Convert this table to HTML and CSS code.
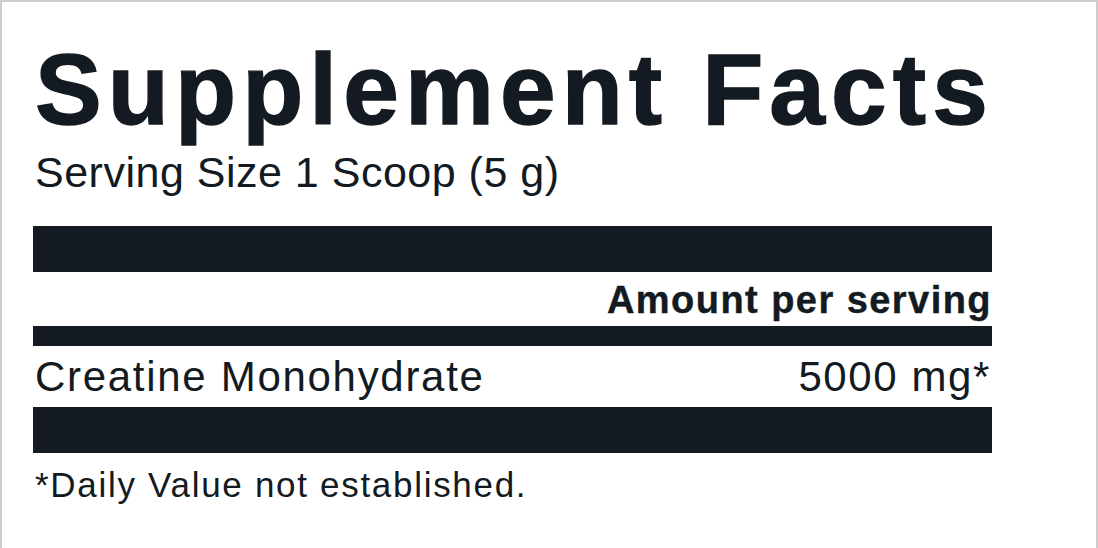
FILE: index.html
```html
<!DOCTYPE html>
<html lang="en">
<head>
<meta charset="utf-8">
<title>Supplement Facts</title>
<link rel="stylesheet" href="styles.css">
</head>
<body>
<div class="label">
  <h1 class="title">Supplement Facts</h1>
  <p class="serving">Serving Size 1 Scoop (5 g)</p>
  <div class="bar bar-thick"></div>
  <p class="amount">Amount per serving</p>
  <div class="bar bar-medium"></div>
  <div class="row">
    <span class="name">Creatine Monohydrate</span>
    <span class="qty">5000 mg*</span>
  </div>
  <div class="bar bar-thick bar-last"></div>
  <p class="note">*Daily Value not established.</p>
</div>
</body>
</html>
```
FILE: styles.css
```css
html, body {
  margin: 0;
  padding: 0;
  background: #ffffff;
}

body {
  font-family: "Liberation Sans", Arial, Helvetica, sans-serif;
  color: #131a21;
  overflow: hidden;
}

.label {
  box-sizing: border-box;
  width: 1098px;
  min-height: 100vh;
  border: 2px solid #cdcdcd;
  border-bottom: none;
  padding: 0 104px 0 31px;
}

.title {
  margin: 37px 0 0 2px;
  font-size: 100px;
  line-height: 100px;
  font-weight: 700;
  letter-spacing: 6.1px;
  -webkit-text-stroke: 1.4px #131a21;
  white-space: nowrap;
}

.serving {
  margin: 8px 0 0 2px;
  font-size: 43px;
  line-height: 50px;
  letter-spacing: 0.5px;
  white-space: nowrap;
}

.bar {
  background: #131a21;
}

.bar-thick {
  height: 46px;
  margin-top: 29px;
}

.amount {
  margin: 8px 0 0 0;
  font-size: 38px;
  line-height: 40px;
  font-weight: 700;
  letter-spacing: 1.45px;
  -webkit-text-stroke: 0.4px #131a21;
  text-align: right;
  white-space: nowrap;
}

.bar-medium {
  height: 20px;
  margin-top: 6px;
}

.row {
  display: flex;
  justify-content: space-between;
  align-items: baseline;
  margin-top: 8px;
  font-size: 42px;
  line-height: 46px;
  white-space: nowrap;
}

.name {
  letter-spacing: 1.7px;
  padding-left: 2px;
}

.qty {
  letter-spacing: 1.6px;
  margin-right: 1px;
}

.bar-last {
  margin-top: 7px;
}

.note {
  margin: 12px 0 0 2px;
  font-size: 35px;
  line-height: 40px;
  letter-spacing: 1.7px;
  white-space: nowrap;
}
```
